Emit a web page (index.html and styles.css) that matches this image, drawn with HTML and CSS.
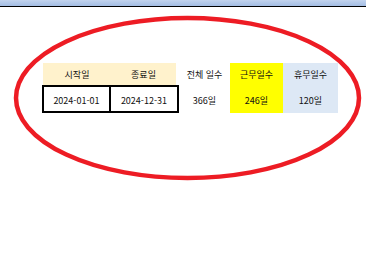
FILE: index.html
```html
<!DOCTYPE html>
<html lang="ko">
<head>
<meta charset="utf-8">
<link rel="stylesheet" href="styles.css">
</head>
<body>
<div class="topbar"></div>
<main class="sheet">
  <div class="grid">
    <div class="cell head h1">시작일</div>
    <div class="cell head h2">종료일</div>
    <div class="cell head">전체 일수</div>
    <div class="cell head yellow">근무일수</div>
    <div class="cell head blue">휴무일수</div>
    <div class="cell data d1">2024-01-01</div>
    <div class="cell data d2">2024-12-31</div>
    <div class="cell data">366일</div>
    <div class="cell data yellow">246일</div>
    <div class="cell data blue">120일</div>
  </div>
  <svg class="ring" width="366" height="278" viewBox="0 0 366 278" aria-hidden="true">
    <ellipse cx="187.5" cy="98" rx="171.5" ry="80" fill="none" stroke="#ED1C24" stroke-width="4.5"/>
  </svg>
</main>
</body>
</html>
```
FILE: styles.css
```css
html, body {
  margin: 0;
  padding: 0;
  background: #ffffff;
}
body {
  width: 366px;
  height: 278px;
  overflow: hidden;
  font-family: "Noto Sans CJK KR", "Noto Sans", sans-serif;
  font-size: 9px;
  color: #111;
}
.topbar {
  height: 6px;
  background: linear-gradient(#c3d4ee, #a3bde4);
  border-bottom: 1px solid #000;
}
.sheet {
  position: relative;
  height: 271px;
}
.grid {
  display: grid;
  grid-template-columns: 68px 68px 51px 53px 55px;
  grid-template-rows: 22px 28px;
  margin-left: 43px;
  padding-top: 56px;
}
.cell {
  display: flex;
  align-items: center;
  justify-content: center;
  box-sizing: border-box;
  white-space: nowrap;
}
.head.h1, .head.h2 {
  background: #fff2cc;
}
.head.h2 {
  margin-right: 3px;
}
.data {
  padding-top: 2px;
}
.d1 {
  border: 2px solid #000;
  margin-left: -1px;
}
.d2 {
  border: 2px solid #000;
  border-left: 0;
}
.yellow {
  background: #ffff00;
}
.blue {
  background: #dde8f5;
}
.ring {
  position: absolute;
  left: 0;
  top: -7px;
  pointer-events: none;
}
```
